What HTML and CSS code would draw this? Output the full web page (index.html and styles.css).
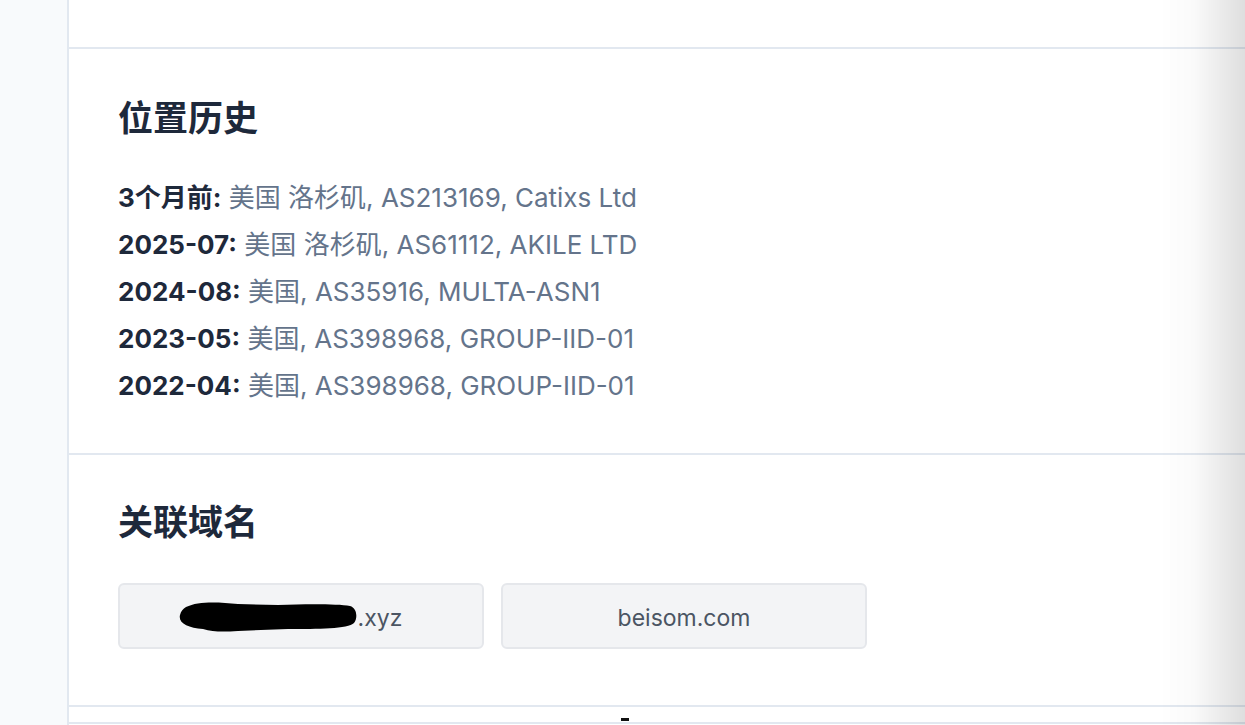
FILE: index.html
```html
<!DOCTYPE html>
<html lang="zh-CN">
<head>
    <meta charset="UTF-8">
    <meta name="viewport" content="width=device-width, initial-scale=1.0">
    <title>IP 详情</title>
    <link rel="stylesheet" href="styles.css">
</head>
<body>
    <div class="side"></div>
    <div class="main">
        <div class="section top"></div>

        <div class="section history">
            <h2>位置历史</h2>
            <div class="row"><b>3个月前:</b> 美国 洛杉矶, AS213169, Catixs Ltd</div>
            <div class="row"><b>2025-07:</b> 美国 洛杉矶, AS61112, AKILE LTD</div>
            <div class="row"><b>2024-08:</b> 美国, AS35916, MULTA-ASN1</div>
            <div class="row"><b>2023-05:</b> 美国, AS398968, GROUP-IID-01</div>
            <div class="row"><b>2022-04:</b> 美国, AS398968, GROUP-IID-01</div>
        </div>

        <div class="section domains">
            <h2>关联域名</h2>
            <div class="domain-list">
                <div class="domain">
                    <svg class="redact" width="180" height="32" viewBox="0 0 180 32">
                        <path d="M8,6 C20,0 40,1 60,3 L100,4 C130,3 160,3 172,5 C179,7 180,17 176,22 C170,28 140,28 110,28 L60,30 C45,31 35,31 25,28 C10,27 0,22 2,14 C3,10 5,8 8,6 Z" fill="#000"/>
                    </svg>.xyz
                </div>
                <div class="domain">beisom.com</div>
            </div>
        </div>

        <div class="footer">
            <span class="caret"></span>
        </div>
    </div>
    <div class="edge-shade"></div>
</body>
</html>
```

FILE: styles.css
```css
body {
    margin: 0;
    padding: 0;
    display: flex;
    min-height: 100vh;
    background-color: #f8fafc;
    font-family: 'Inter', 'Noto Sans CJK SC', sans-serif;
    color: #1e293b;
    overflow: hidden;
}
.side {
    width: 67px;
    flex-shrink: 0;
}
.main {
    flex: 1;
    background: white;
    border-left: 2px solid #e2e8f0;
}
.section {
    border-bottom: 2px solid #e2e8f0;
    padding: 0 49px;
}
.top {
    height: 47px;
}
h2 {
    margin: 0;
    font-size: 35px;
    line-height: 42px;
    font-weight: 700;
    color: #1e293b;
}
.history {
    padding-top: 48px;
    padding-bottom: 44px;
}
.history h2 {
    margin-bottom: 35px;
}
.row {
    font-size: 26px;
    line-height: 47px;
    color: #64748b;
}
.row b {
    color: #1e293b;
    font-weight: 700;
}
.domains {
    padding-top: 46px;
    padding-bottom: 56px;
}
.domains h2 {
    margin-bottom: 40px;
}
.domain-list {
    display: flex;
    gap: 17px;
}
.domain {
    width: 362px;
    height: 58px;
    display: flex;
    align-items: center;
    justify-content: center;
    background-color: #f3f4f6;
    border: 2px solid #e5e7eb;
    border-radius: 6px;
    font-size: 23px;
    color: #4b5563;
    padding-top: 4px;
    box-sizing: content-box;
}
.redact {
    display: block;
    margin-left: -22px;
    margin-top: -2px;
}
.footer {
    height: 15px;
    border-bottom: 2px solid #e2e8f0;
    position: relative;
}
.caret {
    position: absolute;
    left: 552px;
    top: 11px;
    width: 8px;
    height: 3px;
    background: #111;
}
.edge-shade {
    position: fixed;
    top: 0;
    right: 0;
    width: 85px;
    height: 100%;
    pointer-events: none;
    background: linear-gradient(to right, rgba(0, 0, 0, 0), rgba(0, 0, 0, 0.02) 40%, rgba(0, 0, 0, 0.13));
}
```
